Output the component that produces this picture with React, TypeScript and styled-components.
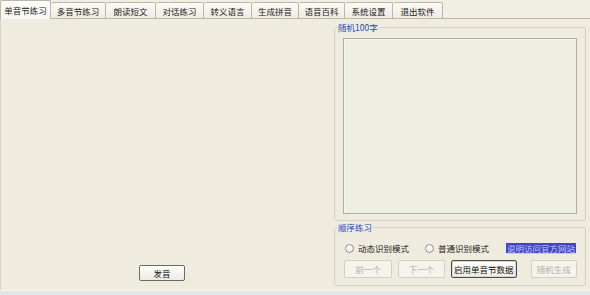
import styled, { createGlobalStyle } from "styled-components";

const GlobalStyle = createGlobalStyle`
    html, body {
        margin: 0;
        padding: 0;
        background: #dfe5ee;
    }
    * { box-sizing: border-box; }
`;

const tabs = [
    { label: "单音节练习", width: 51 },
    { label: "多音节练习", width: 55 },
    { label: "朗读短文", width: 50 },
    { label: "对话练习", width: 48 },
    { label: "转义语言", width: 48 },
    { label: "生成拼音", width: 47 },
    { label: "语音百科", width: 46 },
    { label: "系统设置", width: 48 },
    { label: "退出软件", width: 50 },
];

const App = () => {
    return (
        <>
            <GlobalStyle />
            <Window>
                <TabStrip>
                    {tabs.map((t, i) => (
                        <Tab key={t.label} $active={i === 0} style={{ width: t.width }}>
                            {t.label}
                        </Tab>
                    ))}
                </TabStrip>
                <TabPage>
                    <LeftArea>
                        <PushButton>发音</PushButton>
                    </LeftArea>
                    <RightColumn>
                        <Group $height={199}>
                            <Legend>随机100字</Legend>
                            <TextArea />
                        </Group>
                        <Group $height={64}>
                            <Legend>顺序练习</Legend>
                            <OptionRow>
                                <Radio>
                                    <RadioDot />
                                    动态识别模式
                                </Radio>
                                <Radio>
                                    <RadioDot />
                                    普通识别模式
                                </Radio>
                                <LinkText>说明访问官方网站</LinkText>
                            </OptionRow>
                            <ButtonRow>
                                <XpButton disabled $width={49}>前一个</XpButton>
                                <XpButton disabled $width={47}>下一个</XpButton>
                                <XpButton $width={67} $focused>启用单音节数据</XpButton>
                                <XpButton disabled $width={47}>随机生成</XpButton>
                            </ButtonRow>
                        </Group>
                    </RightColumn>
                </TabPage>
                <StatusStrip />
            </Window>
        </>
    );
};

const Window = styled.div`
    width: 590px;
    height: 295px;
    display: flex;
    flex-direction: column;
    background: #ece9d8;
    font-family: "Noto Sans CJK SC", "Liberation Sans", sans-serif;
    font-size: 8.5px;
    color: #1e1e1e;
    overflow: hidden;
`;

const TabStrip = styled.div`
    height: 19px;
    display: flex;
    align-items: flex-end;
    background: #f1efe4;
`;

const Tab = styled.div<{ $active?: boolean }>`
    height: ${(p) => (p.$active ? "19px" : "17px")};
    display: flex;
    align-items: center;
    justify-content: center;
    white-space: nowrap;
    border: 1px solid #b9b7a8;
    border-bottom: ${(p) => (p.$active ? "none" : "1px solid #b9b7a8")};
    border-left: ${(p) => (p.$active ? "1px solid #b9b7a8" : "none")};
    border-radius: 2px 2px 0 0;
    background: ${(p) =>
        p.$active
            ? "linear-gradient(#fdfdfb, #f7f6f0)"
            : "linear-gradient(#fbfaf5, #eeece2)"};
    color: #222;
    position: relative;
    z-index: ${(p) => (p.$active ? 1 : 0)};
`;

const TabPage = styled.div`
    flex: 1;
    display: flex;
    background: #efecdf;
    border-left: 1px solid #d8d5c8;
    border-top: 1px solid #b9b7a8;
    margin-top: -1px;
`;

const StatusStrip = styled.div`
    height: 5px;
    background: #e1e6ee;
    border-top: 1px solid #f6f5ef;
`;

const LeftArea = styled.div`
    flex: 1;
    display: flex;
    align-items: flex-end;
    justify-content: center;
    padding: 0 10px 9px 0;
`;

const PushButton = styled.button`
    width: 46px;
    height: 16px;
    padding: 0;
    font-family: inherit;
    font-size: 8.5px;
    color: #111;
    border: 1px solid #6b6b66;
    border-radius: 2px;
    background: linear-gradient(#fdfdfb, #ecebe4);
`;

const RightColumn = styled.div`
    width: 257px;
    display: flex;
    flex-direction: column;
    gap: 1px;
    padding: 3px 4px 0 1px;
`;

const Group = styled.fieldset<{ $height: number }>`
    height: ${(p) => p.$height}px;
    margin: 0;
    padding: 6px 8px 4px 8px;
    border: 1px solid #d6d2c0;
    border-radius: 3px;
    min-width: 0;
`;

const Legend = styled.legend`
    padding: 0 1px;
    margin-left: -6px;
    line-height: 10px;
    color: #2549b8;
    font-size: 8.5px;
`;

const TextArea = styled.div`
    height: 176px;
    border: 1px solid #a9b0a5;
    background: #efeee2;
    box-shadow: inset 1px 1px 0 #f8f7ef;
`;

const OptionRow = styled.div`
    display: flex;
    align-items: center;
    height: 14px;
    margin-top: 3px;
    padding-left: 2px;
`;

const Radio = styled.label`
    display: flex;
    align-items: center;
    gap: 4px;
    width: 80px;
    color: #222;
    white-space: nowrap;
`;

const RadioDot = styled.span`
    width: 9px;
    height: 9px;
    border-radius: 50%;
    border: 1px solid #8a9299;
    background: radial-gradient(circle at 40% 40%, #ffffff, #e4e3dc);
`;

const LinkText = styled.span`
    margin-left: auto;
    margin-right: 1px;
    line-height: 10px;
    padding: 0 1px;
    background: #4343c6;
    color: #c6ccff;
    text-decoration: underline;
    white-space: nowrap;
`;

const ButtonRow = styled.div`
    display: flex;
    align-items: center;
    gap: 6px;
    margin-top: 5px;
    padding-left: 1px;
`;

const XpButton = styled.button<{ $width: number; $focused?: boolean }>`
    width: ${(p) => p.$width}px;
    height: 18px;
    padding: 0;
    font-family: inherit;
    font-size: 8.5px;
    white-space: nowrap;
    border-radius: 2px;
    border: 1px solid ${(p) => (p.$focused ? "#4b4b48" : "#d3d0c2")};
    box-shadow: ${(p) => (p.$focused ? "inset 0 0 0 1px #d9d8d0" : "none")};
    background: ${(p) =>
        p.$focused ? "linear-gradient(#fefefd, #eeede6)" : "#f4f3ec"};
    color: ${(p) => (p.$focused ? "#111" : "#b2afa3")};
    &:nth-child(4) {
        margin-left: 8px;
    }
`;

export default App;
